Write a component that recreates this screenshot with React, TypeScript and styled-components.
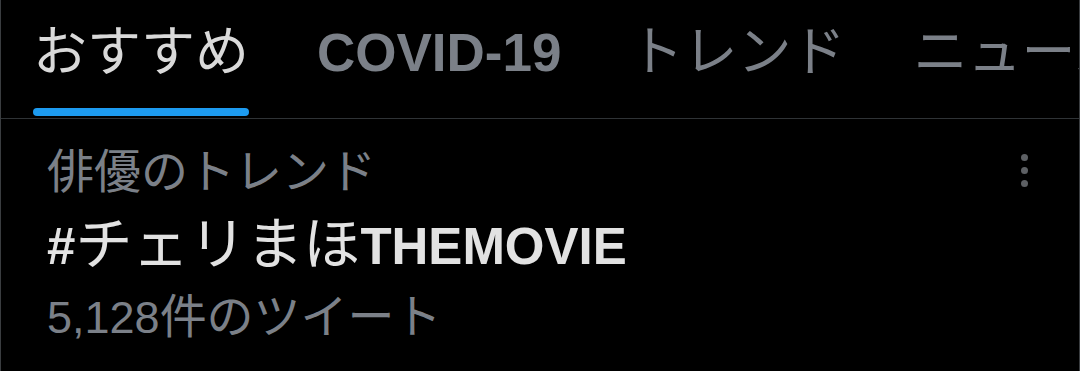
import React from "react";
import styled, { createGlobalStyle } from "styled-components";

const Global = createGlobalStyle`
  html, body { margin: 0; padding: 0; background: #000; }
  body { font-family: "Liberation Sans", "Noto Sans CJK JP", sans-serif; }
`;

const Frame = styled.div`
  box-sizing: border-box;
  width: 1080px;
  height: 371px;
  background: #000;
  border-left: 1px solid #3a3d40;
  border-right: 1px solid #3a3d40;
  overflow: hidden;
`;

const TabBar = styled.nav`
  display: flex;
  gap: 68px;
  height: 118px;
  padding-left: 32px;
  border-bottom: 1px solid #2f3336;
  white-space: nowrap;
  overflow: hidden;
`;

const Tab = styled.div<{ $active?: boolean }>`
  display: flex;
  flex-direction: column;
  align-items: stretch;
  justify-content: space-between;
  color: ${(p) => (p.$active ? "#d9d9d9" : "#7b8088")};
`;

const Label = styled.span`
  display: block;
  padding-top: 21px;
  font-size: 53px;
  line-height: 64px;
  font-weight: 700;
`;

const Jp = styled.span<{ $size?: number }>`
  font-family: "Noto Sans CJK JP", sans-serif;
  font-weight: 400;
  line-height: 0;
  font-size: ${(p) => p.$size ?? 54}px;
`;

const Indicator = styled.span<{ $show?: boolean }>`
  display: block;
  height: 8px;
  margin-bottom: 2px;
  border-radius: 4px;
  background: ${(p) => (p.$show ? "#1d9bf0" : "transparent")};
`;

const Trend = styled.section`
  display: flex;
  justify-content: space-between;
  padding: 16px 51px 0 46px;
`;

const TrendText = styled.div`
  display: flex;
  flex-direction: column;
`;

const Context = styled.div`
  color: #7b8088;
  font-size: 44px;
  line-height: 75px;
`;

const Title = styled.div`
  color: #e2e2e2;
  font-size: 51px;
  line-height: 74px;
  font-weight: 700;
`;

const Count = styled.div`
  color: #7b8088;
  font-size: 45px;
  line-height: 68px;
`;

const MoreButton = styled.div`
  display: flex;
  flex-direction: column;
  gap: 6px;
  padding-top: 19px;
`;

const Dot = styled.span`
  width: 7px;
  height: 7px;
  border-radius: 50%;
  background: #5d6064;
`;

export default function App() {
  return (
    <>
      <Global />
      <Frame>
        <TabBar>
          <Tab $active>
            <Label>
              <Jp>おすすめ</Jp>
            </Label>
            <Indicator $show />
          </Tab>
          <Tab>
            <Label>COVID-19</Label>
            <Indicator />
          </Tab>
          <Tab>
            <Label>
              <Jp>トレンド</Jp>
            </Label>
            <Indicator />
          </Tab>
          <Tab>
            <Label>
              <Jp>ニュース</Jp>
            </Label>
            <Indicator />
          </Tab>
        </TabBar>
        <Trend>
          <TrendText>
            <Context>
              <Jp $size={47}>俳優のトレンド</Jp>
            </Context>
            <Title>
              #<Jp $size={57}>チェリまほ</Jp>THEMOVIE
            </Title>
            <Count>
              5,128<Jp $size={47}>件のツイート</Jp>
            </Count>
          </TrendText>
          <MoreButton>
            <Dot />
            <Dot />
            <Dot />
          </MoreButton>
        </Trend>
      </Frame>
    </>
  );
}
